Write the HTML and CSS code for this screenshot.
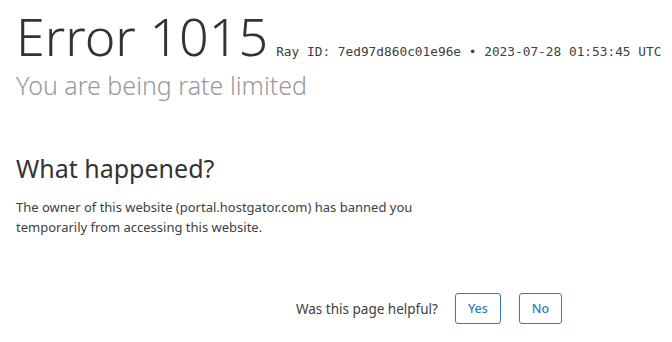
FILE: index.html
```html
<!DOCTYPE html>
<html lang="en">
<head>
    <meta charset="UTF-8">
    <meta name="viewport" content="width=device-width, initial-scale=1.0">
    <title>Access denied | portal.hostgator.com used Cloudflare to restrict access</title>
    <link rel="stylesheet" href="styles.css">
</head>
<body>
    <div class="wrapper">
        <header class="error-header">
            <div class="title-row">
                <h1 class="error-title">Error 1015</h1>
                <span class="ray-info">Ray ID: 7ed97d860c01e96e &bull; 2023-07-28 01:53:45 UTC</span>
            </div>
            <h2 class="error-subtitle">You are being rate limited</h2>
        </header>

        <section class="what-happened">
            <h2>What happened?</h2>
            <p>The owner of this website (portal.hostgator.com) has banned you temporarily from accessing this website.</p>
        </section>

        <div class="feedback">
            <span class="feedback-label">Was this page helpful?</span>
            <button class="feedback-btn">Yes</button>
            <button class="feedback-btn">No</button>
        </div>
    </div>
</body>
</html>
```

FILE: styles.css
```css
body {
    margin: 0;
    font-family: "Noto Sans", "Open Sans", sans-serif;
    color: #313131;
    background: #fff;
}

.wrapper {
    padding: 0 16px;
}

.title-row {
    display: flex;
    align-items: baseline;
    gap: 8px;
    white-space: nowrap;
}

.error-title {
    margin: 0;
    font-size: 52px;
    font-weight: 300;
    line-height: 72px;
    color: #333;
}

.ray-info {
    font-family: "DejaVu Sans Mono", monospace;
    font-size: 12.8px;
    color: #404040;
}

.error-subtitle {
    margin: 0;
    font-size: 25px;
    font-weight: 300;
    line-height: 26px;
    color: #999;
}

.what-happened {
    margin-top: 51px;
    width: 400px;
}

.what-happened h2 {
    margin: 0 0 10px;
    font-size: 25px;
    font-weight: 400;
    line-height: 38px;
    color: #333;
}

.what-happened p {
    margin: 0;
    font-size: 13px;
    line-height: 20px;
    color: #404040;
}

.feedback {
    display: flex;
    align-items: center;
    gap: 17px;
    margin-top: 56px;
    padding-left: 280px;
}

.feedback-label {
    font-size: 13.5px;
    color: #404040;
}

.feedback-btn {
    height: 31px;
    padding: 0 12px;
    border: 1px solid #2f7bbf;
    border-radius: 3px;
    background: #fff;
    color: #2f7bbf;
    font-family: inherit;
    font-size: 12.5px;
    font-weight: 500;
}

.feedback-btn + .feedback-btn {
    margin-left: 1px;
}
```
